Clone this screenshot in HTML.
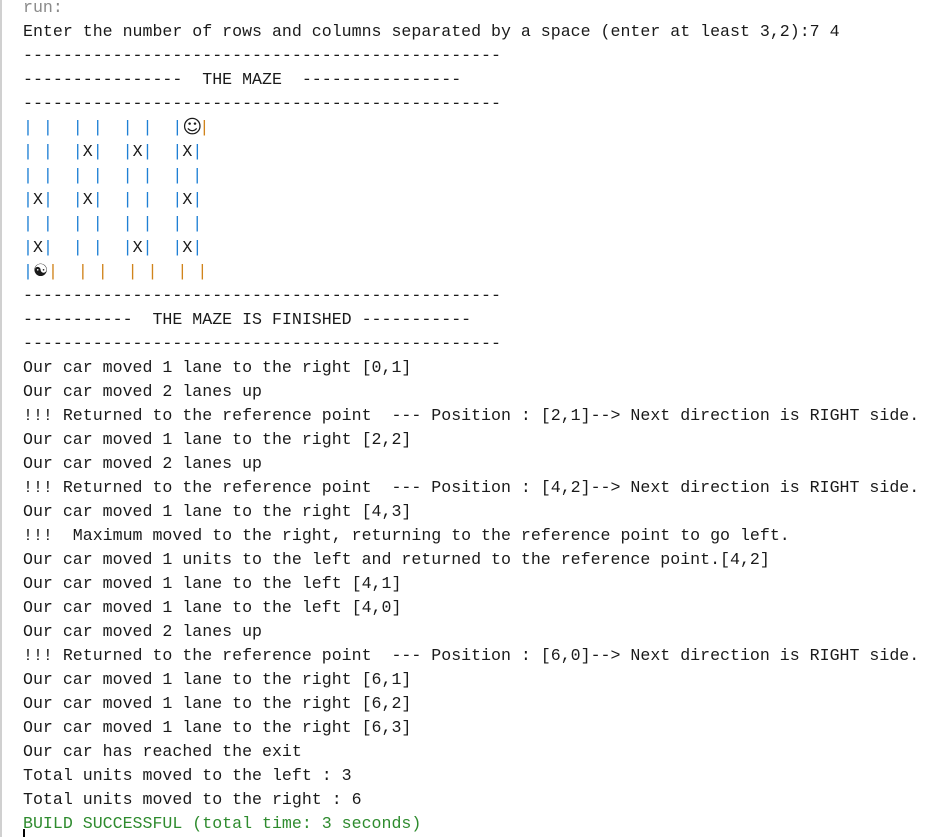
<!DOCTYPE html>
<html><head><meta charset="utf-8">
<style>
html,body{margin:0;padding:0;background:#fff;width:943px;height:837px;overflow:hidden;}
.bar{position:absolute;left:0;top:0;width:2px;height:837px;background:#d0d0d0;}
pre{position:absolute;left:23px;top:-4px;margin:0;font-family:"Liberation Mono",monospace;font-size:16.6px;line-height:24px;color:#1a1a1a;}
.g{color:#8a8a8a}
.b{color:#1f7fd4}
.o{color:#d0841c}
.s{color:#2e8b2e}
.e{display:inline-block;width:17px;text-align:center;font-family:"DejaVu Sans",sans-serif;font-size:19px;line-height:20px;vertical-align:-1px;}
.y{display:inline-block;width:15px;text-align:center;font-family:"DejaVu Sans",sans-serif;font-size:17px;line-height:20px;}
.cur{position:absolute;left:23px;top:829px;width:2px;height:8px;background:#000;}
</style></head><body>
<div class="bar"></div>
<pre><span class="g">run:</span>
Enter the number of rows and columns separated by a space (enter at least 3,2):7 4
------------------------------------------------
----------------  THE MAZE  ----------------
------------------------------------------------
<span class="b">| |  | |  | |  |</span><span class="e">☺</span><span class="o">|</span>
<span class="b">| |  |</span>X<span class="b">|  |</span>X<span class="b">|  |</span>X<span class="b">|</span>
<span class="b">| |  | |  | |  | |</span>
<span class="b">|</span>X<span class="b">|  |</span>X<span class="b">|  | |  |</span>X<span class="b">|</span>
<span class="b">| |  | |  | |  | |</span>
<span class="b">|</span>X<span class="b">|  | |  |</span>X<span class="b">|  |</span>X<span class="b">|</span>
<span class="b">|</span><span class="y">☯</span><span class="o">|  | |  | |  | |</span>
------------------------------------------------
-----------  THE MAZE IS FINISHED -----------
------------------------------------------------
Our car moved 1 lane to the right [0,1]
Our car moved 2 lanes up
!!! Returned to the reference point  --- Position : [2,1]--> Next direction is RIGHT side.
Our car moved 1 lane to the right [2,2]
Our car moved 2 lanes up
!!! Returned to the reference point  --- Position : [4,2]--> Next direction is RIGHT side.
Our car moved 1 lane to the right [4,3]
!!!  Maximum moved to the right, returning to the reference point to go left.
Our car moved 1 units to the left and returned to the reference point.[4,2]
Our car moved 1 lane to the left [4,1]
Our car moved 1 lane to the left [4,0]
Our car moved 2 lanes up
!!! Returned to the reference point  --- Position : [6,0]--> Next direction is RIGHT side.
Our car moved 1 lane to the right [6,1]
Our car moved 1 lane to the right [6,2]
Our car moved 1 lane to the right [6,3]
Our car has reached the exit
Total units moved to the left : 3
Total units moved to the right : 6
<span class="s">BUILD SUCCESSFUL (total time: 3 seconds)</span></pre>
<div class="cur"></div>
</body></html>
